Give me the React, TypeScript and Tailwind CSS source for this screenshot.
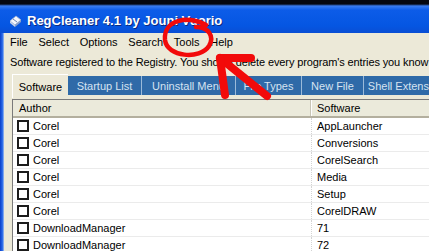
import React from 'react';

interface Row {
  author: string;
  software: string;
}

interface Tab {
  label: string;
  width: number;
}

const ROWS: Row[] = [
  { author: 'Corel', software: 'AppLauncher' },
  { author: 'Corel', software: 'Conversions' },
  { author: 'Corel', software: 'CorelSearch' },
  { author: 'Corel', software: 'Media' },
  { author: 'Corel', software: 'Setup' },
  { author: 'Corel', software: 'CorelDRAW' },
  { author: 'DownloadManager', software: '71' },
  { author: 'DownloadManager', software: '72' },
  { author: 'DownloadManager', software: '73' },
];

const TABS: Tab[] = [
  { label: 'Startup List', width: 74 },
  { label: 'Uninstall Menu', width: 94 },
  { label: 'File Types', width: 66 },
  { label: 'New File', width: 62 },
  { label: 'Shell Extensions', width: 90 },
];

const MENU: string[] = ['File', 'Select', 'Options', 'Search', 'Tools', 'Help'];

const CLASS_NAMES: Record<string, string> = {
  titleBar:
    'h-[33px] flex items-center pt-[8px] pl-[8px] gap-[4px] bg-[linear-gradient(to_bottom,#05070f_0px,#05070f_4px,#3a7cf0_6px,#0d5ce8_10px,#0556e2_26px,#0a4ed4_33px)]',
  blueTab:
    'shrink-0 mt-[3px] h-[19px] pt-[2px] flex items-center justify-center bg-[#2f6aa8] text-[#d6e3f1] border-r border-[#9bbad9] whitespace-nowrap',
  selectedTab:
    'shrink-0 mt-[1px] h-[24px] w-[56px] pt-[1px] flex items-center justify-center bg-[#ECE9D8] border-l border-t border-white whitespace-nowrap',
  headerCell: 'h-full flex items-center',
};

const TitleIcon = (): React.JSX.Element => (
  <svg width="15" height="14" viewBox="0 0 15 14">
    <path d="M2 7 L8 2 L13 6 L7 11 Z" fill="#f4f6fb" stroke="#9fb3d6" strokeWidth="0.8" />
    <path d="M2 7 L7 11 L7 13 L2 9 Z" fill="#c9d3e6" />
    <path d="M7 11 L13 6 L13 8 L7 13 Z" fill="#8aa0c8" />
    <path d="M5 5 L9 8" stroke="#6c84b5" strokeWidth="1" />
  </svg>
);

const Annotation = (): React.JSX.Element => (
  <svg
    className="absolute inset-0 pointer-events-none"
    width="429"
    height="251"
    viewBox="0 0 429 251"
  >
    <path
      d="M206 25 C190 15 163 19 165 40 C167 57 200 60 209 46 C215 36 208 27 196 27"
      fill="none"
      stroke="#f20a0a"
      strokeWidth="4.5"
      strokeLinecap="round"
    />
    <g stroke="#f20a0a" strokeWidth="8" strokeLinecap="round" fill="none">
      <path d="M220 58 L267 96" />
      <path d="M220 58 L251 58" />
      <path d="M220 58 L225 95" />
    </g>
  </svg>
);

export default function App(): React.JSX.Element {
  return (
    <div className="relative w-[429px] h-[251px] overflow-hidden bg-[#ECE9D8] font-['Liberation_Sans',Arial,sans-serif] text-[11px] text-black">
      <div className={CLASS_NAMES.titleBar}>
        <TitleIcon />
        <span className="text-[13px] font-bold text-white [text-shadow:1px_1px_0_#0a2a80] whitespace-nowrap">
          RegCleaner 4.1 by Jouni Vuorio
        </span>
      </div>

      <div className="flex h-[218px]">
        <div className="w-[4px] shrink-0 bg-[linear-gradient(to_right,#0a3fc8,#2a6ae8_60%,#a9c3ee)]" />
        <div className="flex-1 min-w-0 flex flex-col">
          {/* menu bar */}
          <div className="h-[18px] flex items-center gap-[10.7px] pl-[6px]">
            {MENU.map(
              (item: string): React.JSX.Element => (
                <span key={item} className="whitespace-nowrap">
                  {item}
                </span>
              )
            )}
          </div>

          {/* info line */}
          <div className="h-[22px] flex items-center pl-[6px] whitespace-nowrap overflow-hidden tracking-[-0.12px]">
            Software registered to the Registry. You should delete every program's entries you know
            you have uninstalled.
          </div>

          {/* tabs */}
          <div className="h-[25px] flex items-start pl-[8px] overflow-hidden">
            <div className={CLASS_NAMES.selectedTab}>Software</div>
            {TABS.map(
              (tab: Tab): React.JSX.Element => (
                <div key={tab.label} className={CLASS_NAMES.blueTab} style={{ width: tab.width }}>
                  {tab.label}
                </div>
              )
            )}
          </div>

          {/* list */}
          <div className="ml-[8px] mt-[1px] flex-1 min-h-0 bg-white border-l border-t border-[#7a7a7a] overflow-hidden">
            <div className="h-[18px] flex bg-[#EBEADB] border-b-2 border-[#b3af9e]">
              <div className={`${CLASS_NAMES.headerCell} w-[298px] pl-[6px] border-r border-[#c8c5b6]`}>
                Author
              </div>
              <div className={`${CLASS_NAMES.headerCell} flex-1 pl-[5px] border-l border-white`}>
                Software
              </div>
            </div>
            {ROWS.map(
              (row: Row, i: number): React.JSX.Element => (
                <div key={i} className="h-[17px] flex border-b border-[#ebebeb]">
                  <div className="w-[298px] flex items-center pl-[4px] gap-[4px]">
                    <span className="w-[12px] h-[12px] border-2 border-[#1c1c1c] bg-white" />
                    <span>{row.author}</span>
                  </div>
                  <div className="flex-1 flex items-center pl-[5px] border-l border-dotted border-[#d4d4d4]">
                    {row.software}
                  </div>
                </div>
              )
            )}
          </div>
        </div>
      </div>

      <Annotation />
    </div>
  );
}
